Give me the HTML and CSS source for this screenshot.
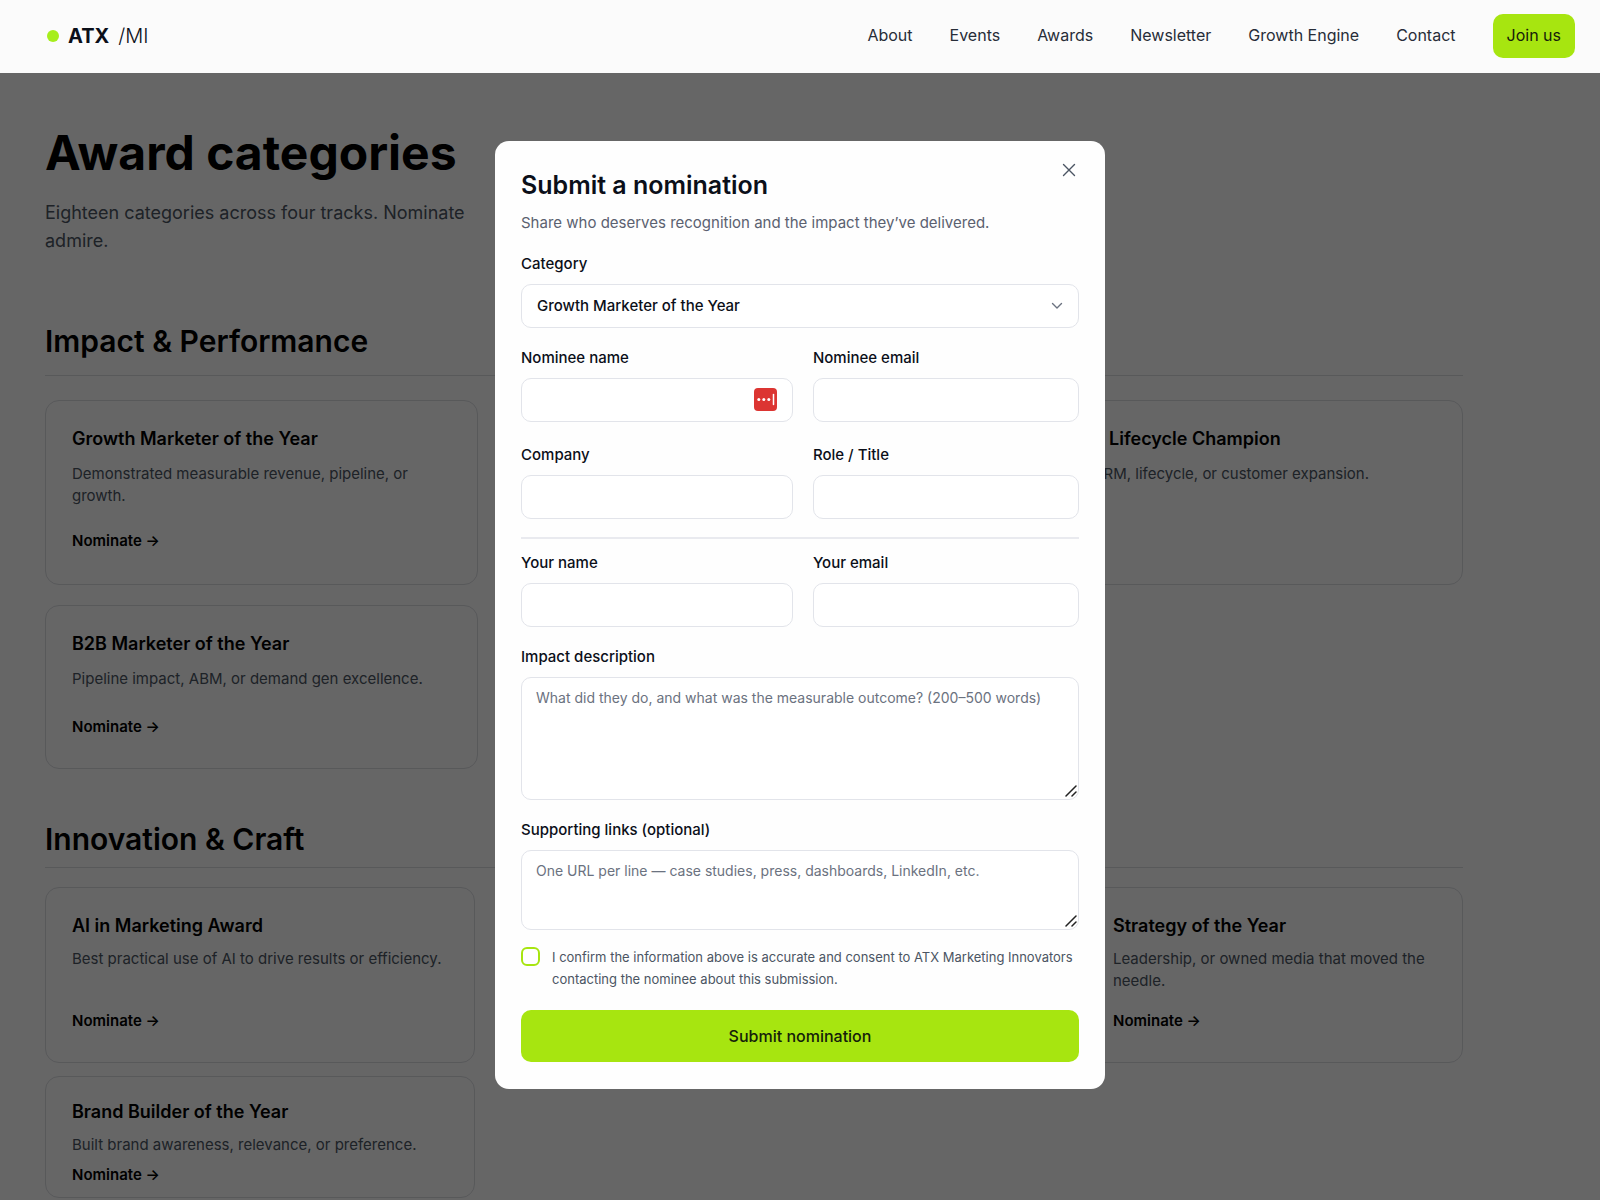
FILE: index.html
```html
<!DOCTYPE html>
<html lang="en">
<head>
<meta charset="utf-8">
<meta name="viewport" content="width=device-width, initial-scale=1">
<title>Award categories – ATX/MI</title>
<link rel="stylesheet" href="styles.css">
</head>
<body>
<header class="site-header">
  <a class="logo" href="#"><span class="logo-dot"></span><span class="logo-name">ATX</span><span class="logo-sub">/MI</span></a>
  <nav class="nav">
    <a href="#">About</a>
    <a href="#">Events</a>
    <a href="#">Awards</a>
    <a href="#">Newsletter</a>
    <a href="#">Growth Engine</a>
    <a href="#">Contact</a>
    <a class="join" href="#">Join us</a>
  </nav>
</header>

<main class="page">
  <h1>Award categories</h1>
  <p class="lead">Eighteen categories across four tracks. Nominate admire.</p>

  <section class="track">
    <h2>Impact &amp; Performance</h2>
    <div class="cards">
      <article class="card">
        <h3>Growth Marketer of the Year</h3>
        <p>Demonstrated measurable revenue, pipeline, or growth.</p>
        <a class="nominate" href="#">Nominate →</a>
      </article>
      <article class="card card-last card-wide-inset">
        <h3>&amp; Lifecycle Champion</h3>
        <p>CRM, lifecycle, or customer expansion.</p>
      </article>
      <article class="card card-short">
        <h3>B2B Marketer of the Year</h3>
        <p>Pipeline impact, ABM, or demand gen excellence.</p>
        <a class="nominate" href="#">Nominate →</a>
      </article>
    </div>
  </section>

  <section class="track track-tight">
    <h2>Innovation &amp; Craft</h2>
    <div class="cards">
      <article class="card">
        <h3>AI in Marketing Award</h3>
        <p>Best practical use of AI to drive results or efficiency.</p>
        <a class="nominate" href="#">Nominate →</a>
      </article>
      <article class="card card-last card-deep-inset">
        <h3>Strategy of the Year</h3>
        <p>Leadership, or owned media that moved the needle.</p>
        <a class="nominate" href="#">Nominate →</a>
      </article>
      <article class="card card-compact">
        <h3>Brand Builder of the Year</h3>
        <p>Built brand awareness, relevance, or preference.</p>
        <a class="nominate" href="#">Nominate →</a>
      </article>
    </div>
  </section>
</main>

<div class="overlay">
  <form class="modal" role="dialog" aria-labelledby="dialog-title">
    <button class="close" type="button" aria-label="Close">
      <svg width="14" height="14" viewBox="0 0 14 14" fill="none" stroke="currentColor" stroke-width="1.4" stroke-linecap="round"><path d="M1.500 1.500l11 11M12.500 1.500l-11 11"/></svg>
    </button>
    <h2 id="dialog-title">Submit a nomination</h2>
    <p class="intro">Share who deserves recognition and the impact they’ve delivered.</p>

    <div class="field">
      <label for="category">Category</label>
      <div class="control">
        <select id="category"><option>Growth Marketer of the Year</option></select>
        <svg class="chevron" width="12" height="8" viewBox="0 0 12 8" fill="none" stroke="currentColor" stroke-width="1.4" stroke-linecap="round" stroke-linejoin="round"><path d="M1.500 1.500L6 6l4.500-4.500"/></svg>
      </div>
    </div>

    <div class="pair">
      <div class="field">
        <label for="nominee-name">Nominee name</label>
        <div class="control">
          <input id="nominee-name" type="text">
          <svg class="autofill" width="23" height="23" viewBox="0 0 23 23"><rect width="23" height="23" rx="4" fill="#dc3532"/><circle cx="4.800" cy="11.500" r="1.500" fill="#fff"/><circle cx="9.800" cy="11.500" r="1.500" fill="#fff"/><circle cx="14.800" cy="11.500" r="1.500" fill="#fff"/><path d="M19.500 6.500v10" stroke="#fff" stroke-width="1.500" stroke-linecap="round"/></svg>
        </div>
      </div>
      <div class="field">
        <label for="nominee-email">Nominee email</label>
        <input id="nominee-email" type="email">
      </div>
      <div class="field">
        <label for="company">Company</label>
        <input id="company" type="text">
      </div>
      <div class="field">
        <label for="role">Role / Title</label>
        <input id="role" type="text">
      </div>
    </div>

    <hr>

    <div class="pair">
      <div class="field">
        <label for="your-name">Your name</label>
        <input id="your-name" type="text">
      </div>
      <div class="field">
        <label for="your-email">Your email</label>
        <input id="your-email" type="email">
      </div>
    </div>

    <div class="field">
      <label for="impact">Impact description</label>
      <div class="control">
        <textarea id="impact" class="tall" placeholder="What did they do, and what was the measurable outcome? (200–500 words)"></textarea>
        <svg class="grip" width="12" height="12" viewBox="0 0 12 12" stroke="currentColor" stroke-width="1.500" stroke-linecap="round"><path d="M1 11L11 1M7 11l4-4"/></svg>
      </div>
    </div>

    <div class="field">
      <label for="links">Supporting links (optional)</label>
      <div class="control">
        <textarea id="links" placeholder="One URL per line — case studies, press, dashboards, LinkedIn, etc."></textarea>
        <svg class="grip" width="12" height="12" viewBox="0 0 12 12" stroke="currentColor" stroke-width="1.500" stroke-linecap="round"><path d="M1 11L11 1M7 11l4-4"/></svg>
      </div>
    </div>

    <div class="consent">
      <input id="consent" type="checkbox">
      <label for="consent">I confirm the information above is accurate and consent to ATX Marketing Innovators contacting the nominee about this submission.</label>
    </div>

    <button class="submit" type="submit">Submit nomination</button>
  </form>
</div>
</body>
</html>
```

FILE: styles.css
```css
* {
  box-sizing: border-box;
}

body {
  margin: 0;
  height: 100vh;
  overflow: hidden;
  background: #fff;
  color: #0b0f19;
  font-family: Inter, "Liberation Sans", sans-serif;
  font-size: 15px;
  line-height: 22px;
}

h1,
h2,
h3,
p {
  margin: 0;
}

a {
  color: inherit;
  text-decoration: none;
}

button,
input,
select,
textarea {
  font: inherit;
  color: inherit;
}

/* Header */
.site-header {
  position: relative;
  z-index: 2;
  display: flex;
  align-items: center;
  justify-content: space-between;
  height: 73px;
  padding: 0 25px 1px 47px;
  background: #fbfbfb;
}

.logo {
  display: flex;
  align-items: center;
  gap: 9px;
  font-size: 20px;
  line-height: 28px;
}

.logo-dot {
  width: 12px;
  height: 12px;
  border-radius: 50%;
  background: #a6ee1c;
}

.logo-name {
  font-weight: 700;
}

.logo-sub {
  font-weight: 300;
}

.nav {
  display: flex;
  align-items: baseline;
  gap: 37px;
  color: #272d38;
  font-size: 16px;
}

.join {
  padding: 10px 14px 12px;
  border-radius: 10px;
  background: #a7e510;
  color: #16200a;
}

/* Award categories */
.page {
  max-width: 1508px;
  padding: 48px 45px 0;
  color: #000;
}

h1 {
  font-size: 48px;
  line-height: 64px;
  font-weight: 700;
}

.lead {
  max-width: 440px;
  margin-top: 14px;
  color: #4b5563;
  font-size: 18px;
  line-height: 28px;
}

.track {
  margin-top: 66px;
}

.track h2 {
  padding-bottom: 14px;
  border-bottom: 1px solid #dcdee2;
  font-size: 30px;
  line-height: 40px;
  font-weight: 600;
}

.cards {
  display: grid;
  grid-template-columns: repeat(3, 1fr);
  gap: 20px 59px;
  margin-top: 24px;
}

.card {
  display: flex;
  flex-direction: column;
  min-height: 185px;
  padding: 24px 26px 32px;
  border: 1px solid #dcdee2;
  border-radius: 14px;
}

.card-last {
  grid-column: 3;
}

.card-short {
  min-height: 164px;
  padding-bottom: 30px;
}

.card h3 {
  font-size: 18px;
  line-height: 28px;
  font-weight: 600;
}

.card p {
  margin-top: 10px;
  color: #4b5563;
}

.nominate {
  margin-top: auto;
  font-weight: 600;
}

.card-wide-inset {
  padding-left: 62px;
}

.card-deep-inset {
  padding-left: 79px;
}

.track-tight {
  margin-top: 50px;
}

.track-tight h2 {
  padding-bottom: 8px;
}

.track-tight .cards {
  gap: 13px 64px;
  margin-top: 19px;
}

.track-tight .card {
  min-height: 176px;
  padding-bottom: 30px;
}

.track-tight .card p {
  margin-top: 8px;
}

.track-tight .card-compact {
  min-height: 122px;
  padding-top: 21px;
  padding-bottom: 11px;
}

/* Dialog */
.overlay {
  position: fixed;
  inset: 73px 0 0;
  z-index: 1;
  display: flex;
  align-items: flex-start;
  justify-content: center;
  padding-top: 68px;
  background: rgba(0, 0, 0, 0.6);
}

.modal {
  position: relative;
  display: flex;
  flex-direction: column;
  gap: 20px;
  width: 610px;
  padding: 27px 26px;
  border-radius: 14px;
  background: #fefefe;
}

.modal h2 {
  font-size: 25px;
  line-height: 34px;
  font-weight: 600;
}

.intro {
  margin-top: -10px;
  color: #5b6170;
}

.close {
  position: absolute;
  top: 17px;
  right: 24px;
  display: grid;
  place-items: center;
  width: 24px;
  height: 24px;
  padding: 0;
  border: 0;
  background: none;
  color: #4b5563;
}

.field {
  display: flex;
  flex-direction: column;
  gap: 10px;
}

.field label {
  font-weight: 500;
  line-height: 20px;
}

.control {
  position: relative;
  display: flex;
}

.field input,
.field select,
.field textarea {
  width: 100%;
  height: 44px;
  padding: 0 15px;
  border: 1px solid #e2e4ea;
  border-radius: 10px;
  background: #fff;
  appearance: none;
}

.field select {
  font-weight: 500;
}

.field textarea {
  height: 80px;
  padding: 9px 14px;
  font-size: 14px;
  resize: none;
}

.field .tall {
  height: 123px;
}

textarea::placeholder {
  color: #6b7280;
}

.chevron {
  position: absolute;
  top: 18px;
  right: 16px;
  color: #6b7280;
}

.autofill {
  position: absolute;
  top: 10px;
  right: 16px;
}

.grip {
  position: absolute;
  right: 2px;
  bottom: 3px;
  color: #222;
}

.pair {
  display: grid;
  grid-template-columns: 46fr 45fr;
  gap: 23px 20px;
}

hr {
  width: 100%;
  height: 2px;
  margin: -2px 0 -6px;
  border: 0;
  background: #e9eaef;
}

.consent {
  display: flex;
  gap: 12px;
  margin-top: -4px;
  color: #4b5563;
  font-size: 13px;
}

.consent input {
  flex: none;
  width: 19px;
  height: 19px;
  margin: 1px 0 0;
  border: 2px solid #a7e510;
  border-radius: 6px;
  background: #fff;
  appearance: none;
}

.submit {
  height: 52px;
  border: 0;
  border-radius: 10px;
  background: #a7e510;
  color: #14200a;
  font-size: 16px;
  font-weight: 500;
}
```
